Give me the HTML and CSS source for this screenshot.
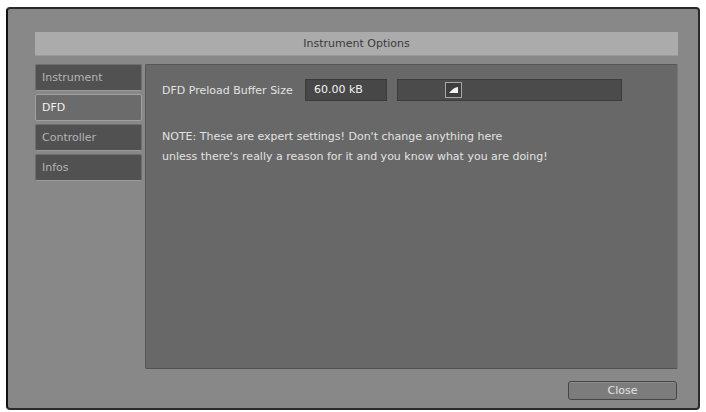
FILE: index.html
```html
<!DOCTYPE html>
<html lang="en">
<head>
    <meta charset="UTF-8">
    <meta name="viewport" content="width=device-width, initial-scale=1.0">
    <title>Instrument Options</title>
    <link rel="stylesheet" href="styles.css">
</head>
<body>
    <div class="window">
        <div class="title-bar">Instrument Options</div>
        <div class="main">
            <ul class="tabs">
                <li class="tab">Instrument</li>
                <li class="tab active">DFD</li>
                <li class="tab">Controller</li>
                <li class="tab">Infos</li>
            </ul>
            <section class="panel">
                <div class="setting-row">
                    <span class="setting-label">DFD Preload Buffer Size</span>
                    <span class="value-box">60.00 kB</span>
                    <div class="slider">
                        <span class="slider-handle">
                            <svg width="11" height="8" viewBox="0 0 11 8">
                                <path d="M1 7 L10 7 L10 1 Q6 1 1 7 Z" fill="#f2f2f2"/>
                            </svg>
                        </span>
                    </div>
                </div>
                <p class="note">
                    NOTE: These are expert settings! Don't change anything here<br>
                    unless there's really a reason for it and you know what you are doing!
                </p>
            </section>
        </div>
        <div class="footer">
            <button class="close-btn">Close</button>
        </div>
    </div>
</body>
</html>
```

FILE: styles.css
```css
* {
    margin: 0;
    padding: 0;
    box-sizing: border-box;
}
body {
    font-family: "DejaVu Sans", sans-serif;
    font-size: 11px;
    background-color: #ffffff;
    padding: 7px 6px 2px 6px;
}
.window {
    width: 694px;
    height: 403px;
    background-color: #888888;
    border: 2px solid #2a2a2a;
    border-left-color: #111111;
    border-radius: 4px;
    padding: 23px 20px 8px 27px;
    display: flex;
    flex-direction: column;
}
.title-bar {
    height: 24px;
    background-color: #ababab;
    border-bottom: 1px solid #9a9a9a;
    color: #3a3a3a;
    text-align: center;
    line-height: 24px;
}
.main {
    display: flex;
    gap: 3px;
    margin-top: 8px;
    height: 305px;
}
.tabs {
    list-style: none;
    width: 107px;
    display: flex;
    flex-direction: column;
    gap: 3px;
}
.tab {
    height: 27px;
    line-height: 25px;
    padding-left: 6px;
    background-color: #515151;
    border: 1px solid #6e6e6e;
    border-bottom-color: #9a9a9a;
    border-radius: 2px;
    color: #b4b4b4;
}
.tab.active {
    background-color: #6b6b6b;
    border-color: #a0a0a0;
    color: #f0f0f0;
}
.panel {
    flex: 1;
    background-color: #686868;
    border: 1px solid #575757;
    border-right-color: #777777;
    border-bottom-color: #505050;
    border-radius: 2px;
    padding: 14px 16px;
    color: #e2e2e2;
}
.setting-row {
    display: flex;
    align-items: center;
    height: 22px;
}
.setting-label {
    width: 143px;
}
.value-box {
    width: 82px;
    height: 22px;
    line-height: 20px;
    padding-left: 8px;
    background-color: #474747;
    border: 1px solid #3a3a3a;
    color: #f4f4f4;
}
.slider {
    position: relative;
    width: 225px;
    height: 22px;
    margin-left: 10px;
    background-color: #4b4b4b;
    border: 1px solid #3c3c3c;
}
.slider-handle {
    position: absolute;
    left: 47px;
    top: 2px;
    width: 17px;
    height: 16px;
    background-color: #3e3e3e;
    border: 1px solid #a8a8a8;
    display: flex;
    align-items: center;
    justify-content: center;
}
.note {
    margin-top: 26px;
    line-height: 20px;
}
.footer {
    display: flex;
    justify-content: flex-end;
    margin-top: 12px;
    padding-right: 1px;
}
.close-btn {
    width: 109px;
    height: 19px;
    background-color: #7c7c7c;
    border: 1px solid #454545;
    border-radius: 3px;
    box-shadow: inset 0 1px 0 #8e8e8e;
    color: #e4e4e4;
    font-family: "DejaVu Sans", sans-serif;
    font-size: 11px;
}
```
